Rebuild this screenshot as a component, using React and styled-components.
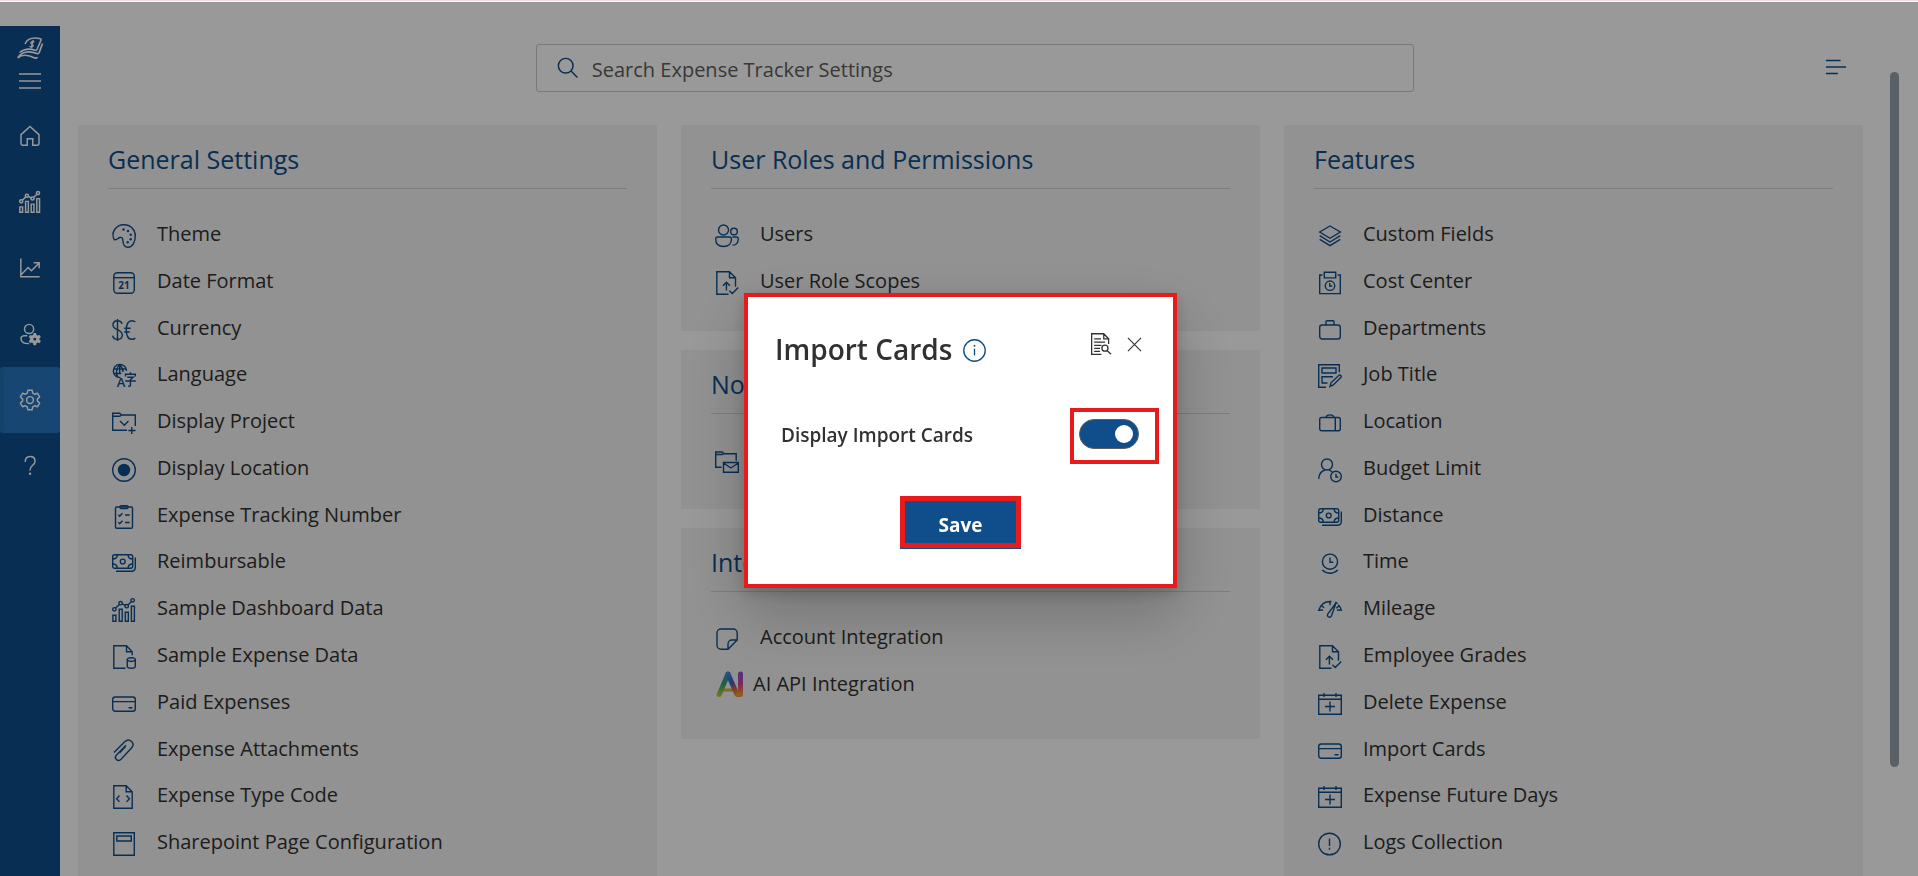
import React from "react";
import styled, { createGlobalStyle, css } from "styled-components";

const blue = "#0f4e8a";
const ink = "#323130";
const red = "#e81a1c";

const GlobalStyle = createGlobalStyle`
  * { box-sizing: border-box; }
  body {
    margin: 0;
    background: #fff;
    color: ${ink};
    font-family: "Segoe UI", "Open Sans", "Noto Sans", sans-serif;
    font-size: 20px;
    overflow: hidden;
  }
  h1, h2, ul { margin: 0; padding: 0; }
  button { font: inherit; color: inherit; background: none; border: 0; padding: 0; cursor: pointer; }
  a { color: inherit; text-decoration: none; }
`;

/* ---------- icons ---------- */

const Svg = styled.svg`
  display: block;
  flex: none;
  width: ${(p) => p.$size || 24}px;
  height: ${(p) => p.$size || 24}px;
  fill: none;
  stroke: currentColor;
  stroke-width: ${(p) => p.$weight || 1.4};
  overflow: visible;
  .solid { fill: currentColor; stroke: none; }
  text { fill: currentColor; stroke: none; font-family: "Open Sans", "Noto Sans", sans-serif; }
`;

const plusCalendar = (
  <>
    <path d="M.7 3.2h22.6v19.1H.7zM.7 7.3h22.6M6 1v4M18 1v4M12 9.500v10M7 14.500h10" />
  </>
);
const money = (
  <>
    <rect x=".7" y="3.7" width="20" height="13.6" rx="2" />
    <circle cx="10.7" cy="10.5" r="2.4" />
    <path d="M.7 8c3 0 4.6-1.5 4.6-4.3M.7 13c3 0 4.6 1.500 4.600 4.300M20.700 8c-3 0-4.600-1.500-4.600-4.300M20.700 13c-3 0-4.600 1.500-4.600 4.300M23.300 6.500v10.300a3.500 3.500 0 0 1-3.500 3.500H4" />
  </>
);
const card = (
  <>
    <rect x=".7" y="5" width="22.6" height="14.300" rx="2.500" />
    <path d="M.7 9.600h22.600M16.500 15.700h4" />
  </>
);
const barTrend = (
  <>
    <path d="M.9 17.300h3v5.900h-3zM7.200 11.300h3v11.900h-3zM13.300 14.300h3v8.900h-3zM19.400 8.300h3v14.900h-3z" />
    <circle cx="2.400" cy="11.300" r="1.700" />
    <circle cx="8.600" cy="5.200" r="1.700" />
    <circle cx="14.700" cy="8.200" r="1.700" />
    <circle cx="20.700" cy="2.300" r="1.700" />
    <path d="M3.600 10.100l3.800-3.700M10.200 5.900l3 1.500M15.900 7l3.600-3.500" />
  </>
);
const docUpload = (
  <>
    <path d="M13.500 23.300H1.800V.7h12.700l6 6v9M14.500.7v6h6M11.400 19.500v-8.300M7.900 14.700l3.500-3.500 3.500 3.500M14.300 19.700l3 2.800 6-6" />
  </>
);

const icons = {
  theme: (
    <>
      <path d="M2.200 15.700C-1.500 8.500 4 .7 11.800.7c7 0 11.500 5 11.500 11.300 0 6-2.800 11.300-7.300 11.300-4 0-5-3.300-5.200-7.300-.1-2.300-1.200-3-3-2.500-2.300.6-3.300 2.900-5.600 2.200z" />
      <g className="solid">
        <circle cx="11.500" cy="5.500" r="1.200" /><circle cx="16" cy="7" r="1.200" />
        <circle cx="18.700" cy="10.700" r="1.200" /><circle cx="18.700" cy="15.200" r="1.200" />
        <circle cx="15.700" cy="18.300" r="1.200" />
      </g>
    </>
  ),
  date: (
    <>
      <rect x="1.800" y="1.800" width="20.500" height="20.500" rx="3.500" />
      <path d="M1.800 6.700h20.500" />
      <text x="12" y="18" fontSize="10" fontWeight="700" textAnchor="middle">21</text>
    </>
  ),
  currency: (
    <>
      <path d="M5.500 1v22M10 5.800C9.600 3.700 8 2.700 5.500 2.700 2.800 2.700 1 4.200 1 6.900c0 5.600 9.300 3.800 9.300 10 0 2.900-1.800 4.400-4.800 4.400S1 20 .7 17.600" />
      <path d="M23.300 4c-1-1-2.200-1.300-3.300-1.300-4 0-5.700 4.200-5.700 9.300s1.700 9.300 5.700 9.300c1.100 0 2.300-.3 3.300-1.300M12.200 10.300h6.500M12.200 14h5.500" />
    </>
  ),
  language: (
    <>
      <path d="M8.500 13.500A6.600 6.600 0 1 1 14.500 7M6 13.400C3.800 10.500 3.800 4 7.700.8c2.500 2.500 3.300 4.700 3.300 7.200M1.500 5h12.300M1.300 9.500h8M7.700 1v8.500" />
      <text x="9" y="23" fontSize="13" fontWeight="600" textAnchor="middle">A</text>
      <path d="M13.500 12.500v-2.300h9.800v2.300M18.400 8.200v2M15.300 13.300h5.800l-2.700 2.500v5.200c0 1-.7 1.300-2.200 1.300M13.200 17h10.600" />
    </>
  ),
  project: (
    <>
      <path d="M15 19.300H.7V2.300h7l2 1.700h13.600v11M.7 5.300h7l2-1.300M8 10l4.300 4.300L16.500 10M19.800 16v7M16.300 19.500h7.200" />
    </>
  ),
  target: (
    <>
      <circle cx="12" cy="12" r="11.300" />
      <circle className="solid" cx="12" cy="12" r="6.200" />
    </>
  ),
  checklist: (
    <>
      <rect x="3.500" y="2" width="17" height="21.300" rx="1.200" />
      <rect x="8" y=".7" width="8" height="2.800" rx="1.300" />
      <path d="M6.300 9.800l1.400 1.400 2.800-3M6.300 17.300l1.400 1.400 2.800-3M13 10h4.700M13 17.500h4.700" />
    </>
  ),
  money,
  barTrend,
  docData: (
    <>
      <path d="M13.500 23.300H1.800V.7h12.700l5.700 6v3.500M14.500.7v6h5.700" />
      <ellipse cx="19.300" cy="14.500" rx="4" ry="1.800" />
      <path d="M15.300 14.500v6.800c0 2.600 8 2.600 8 0v-6.800" />
    </>
  ),
  card,
  clip: (
    <path d="M2 13.500L12.700 2.800c5-4.500 11 1.500 6.800 6.200L9 20.200c-3.300 3.200-7.600-1-4.500-4.300L14 6.300M13.500 7.500L7.500 14" />
  ),
  code: (
    <path d="M1.800.7h12.400l6 6v16.600H1.800zM14.200.7v6h6M7.500 10.500L4.600 13.700l2.900 3.200M14.500 10.500l2.900 3.200-2.900 3.200" />
  ),
  page: <path d="M1.800.7h20.500v22.600H1.800zM4.800 4h14.500v5H4.800z" />,
  users: (
    <>
      <circle cx="8.500" cy="6" r="5" />
      <circle cx="19" cy="7.500" r="3.300" />
      <path d="M2.800 13h11.700c1.200 0 2 .8 2 2 0 4.500-3 7.500-8 7.500S.7 19.500.7 15c0-1.200.9-2 2.100-2zM17.500 13h4c1.100 0 1.800.7 1.800 1.800 0 4-2.300 6.700-5.800 6.300" />
    </>
  ),
  docUpload,
  folderMail: (
    <path d="M6.500 18.300H.7V3h6.500l2 1.700h12v7M.7 5.500h6.500l2-.8M8.500 13.500h14.800v9.800H8.500zM8.500 14l7.400 5 7.400-5" />
  ),
  note: (
    <path d="M13 22.200H6a4 4 0 0 1-4-4V6a4 4 0 0 1 4-4h12.200a4 4 0 0 1 4 4v7zM22.200 13h-5.200a4 4 0 0 0-4 4v5.200" />
  ),
  layers: (
    <path d="M12 2l10.300 6L12 14.300 1.700 8zM1.700 11.700L12 18l10.300-6.300M1.700 15.300L12 21.700l10.300-6.400" />
  ),
  cost: (
    <>
      <path d="M4.500 4H1.700v18.600h20.600V4h-2.800M6.300 1.300h11.400v5.600H6.300zM11.700 12v3h2.500" />
      <circle cx="12" cy="14.700" r="4.700" />
    </>
  ),
  briefcase: (
    <>
      <rect x="1.700" y="7" width="20.600" height="14" rx="2.500" />
      <path d="M8 7V3.700c0-.7.400-1 1-1h6c.6 0 1 .3 1 1V7" />
    </>
  ),
  form: (
    <path d="M8 23.300H.7V.7h20.600v7.500M4 4h14v5H4zM4 19.500V12.800h11M4 19h5.500M12 22.500l1-3.700 8-7.500c1.300-1 3 .6 2 1.900l-8 8z" />
  ),
  luggage: (
    <>
      <rect x="1.700" y="6.500" width="20.600" height="13.300" rx="2" />
      <path d="M17.300 6.500v13.300M8 6.500c.7-3.500 7.300-3.500 8 0" />
    </>
  ),
  budget: (
    <>
      <circle cx="9" cy="6.500" r="5.500" />
      <path d="M.7 21c.3-5 2.800-8.200 6.500-9M11 12l3.500 2M18 15.700v3.300h2.300" />
      <circle cx="18" cy="18.500" r="5.300" />
    </>
  ),
  time: (
    <>
      <circle cx="12" cy="10.700" r="7.600" />
      <path d="M12 6.500v4.800h3.300M4.200 19c4.500 4.300 11.100 4.300 15.600 0" />
    </>
  ),
  gauge: (
    <path d="M5 12l-4.300.3C3 5.800 8 3 13.500 3.500M3.500 7.500l2.500 2.300M12 3.300v4M20.300 6.800c1.500 1.500 2.500 3.500 3 5.500L19 12M20.800 8l-2.500 2.300M18 5l-8.300 11c-1.300 2.500 2.300 4.500 3.800 1.800zM17.200 4.200l2.500 1.300" />
  ),
  plusCalendar,
  alert: (
    <>
      <circle cx="11.500" cy="12" r="10.800" />
      <path d="M11.500 6.500v7.500M11.500 15.800v2" />
    </>
  ),
  home: <path d="M2.200 10.500L12 1.500l9.800 9v10a1.500 1.500 0 0 1-1.500 1.500H15v-7H9v7H3.700a1.500 1.500 0 0 1-1.500-1.500z" />,
  lineTrend: <path d="M2 1.500v20h20.500M2.500 19l7.500-7.500 3.500 3.500 8-8M16 6.300h6v6" />,
  userGear: (
    <>
      <circle cx="11" cy="6.500" r="5" />
      <path d="M9 13.800H5.500c-5 0-5 8.700 4.500 8.700h1" />
      <path className="solid" fillRule="evenodd" d="M15.800 11h2.800l.5 2 1.300.7 2-.7 1.400 2.400-1.500 1.400v1.500l1.500 1.400-1.400 2.400-2-.7-1.300.8-.5 2h-2.800l-.5-2-1.300-.8-2 .7-1.400-2.400 1.500-1.400v-1.500l-1.500-1.400 1.400-2.400 2 .7 1.300-.7zM17.200 16a1.600 1.600 0 1 0 0 3.200 1.600 1.600 0 0 0 0-3.200z" />
    </>
  ),
  gear: (
    <>
      <path d="M9.700 1.300h4.600l.7 3.200 2.100 1.200 3.100-1 2.300 4-2.400 2.100v2.400l2.400 2.100-2.300 4-3.100-1-2.100 1.200-.7 3.200H9.700L9 19.500l-2.100-1.200-3.100 1-2.300-4 2.400-2.100v-2.400L1.500 8.700l2.300-4 3.100 1L9 4.500z" strokeLinejoin="round" />
      <circle cx="12" cy="12" r="3.700" />
    </>
  ),
  help: (
    <>
      <path d="M6.800 7.500c0-3.700 2-5.800 5.300-5.800s5.400 2 5.400 5c0 4.500-5.400 4.600-5.400 9.500v.8" />
      <circle className="solid" cx="12.100" cy="20.500" r="1.300" />
    </>
  ),
  menu: <path d="M1 5h22M1 12h22M1 19h22" />,
  search: (
    <>
      <circle cx="9.500" cy="9.500" r="8" />
      <path d="M15.300 15.300l7 7" />
    </>
  ),
  filter: <path d="M1 5h16M1 12h22M1 19h13" />,
  info: (
    <>
      <circle cx="12" cy="12" r="11.200" />
      <path d="M12 10.200v7" />
      <circle className="solid" cx="12" cy="7" r="1" />
    </>
  ),
  docSearch: (
    <>
      <path d="M12.500 23.200H1.800V.8H15l5.300 5.500V12M15 .8v5.500h5.300M4.500 6.500h7.500M4.500 10h12M4.500 13.500h8M4.500 16.800h6.500M4.500 20h6.500M18.500 19.200l4.500 4" />
      <circle cx="16.300" cy="16.500" r="3.300" />
    </>
  ),
  close: <path d="M1.500 1.500l21 21M22.500 1.500l-21 21" />,
};

const Icon = ({ name, size, weight }) => (
  <Svg viewBox="0 0 24 24" $size={size} $weight={weight} aria-hidden="true">
    {icons[name]}
  </Svg>
);

const Logo = () => (
  <Svg viewBox="0 0 26 24" $size={26} $weight={1.5} aria-hidden="true">
    <path d="M8 8c2-4.500 7-7 15.300-5.300.8.200 1 .7.700 1.400L20 13.500c-.4 1-1 1.100-1.800.8-5.500-2-10.500-1.800-15.700 2.200" />
    <path d="M25.500 7.500l-3.300 9c-.4 1-1.200 1.300-2.200 1C13 15 5.500 15 .7 21.700c4.500-3.200 10.500-3.200 17 .2 1.300.5 2.300.3 2.800-.9" strokeWidth="1.700" />
    <path d="M17.300 6.300c-1-1.300-3.300-.9-3.400.5-.1 1.500 2.400 1.400 2.200 3-.2 1.500-2.700 1.700-3.600.2M16.200 4l-2.200 8.300" strokeWidth="1.300" />
  </Svg>
);

const AiLogo = () => (
  <Svg viewBox="0 0 28 28" $size={28} $weight={5} aria-hidden="true">
    <defs>
      <linearGradient id="aiLeft" gradientUnits="userSpaceOnUse" x1="12" y1="2" x2="4" y2="26">
        <stop offset="0" stopColor="#3c8fd0" /><stop offset=".5" stopColor="#35a06a" /><stop offset="1" stopColor="#b9c93a" />
      </linearGradient>
      <linearGradient id="aiRight" gradientUnits="userSpaceOnUse" x1="12" y1="3" x2="22" y2="25">
        <stop offset="0" stopColor="#3c8fd0" /><stop offset=".45" stopColor="#3f5fcc" /><stop offset=".75" stopColor="#e0623c" /><stop offset="1" stopColor="#f09a3a" />
      </linearGradient>
      <linearGradient id="aiStem" gradientUnits="userSpaceOnUse" x1="26" y1="2" x2="25" y2="26">
        <stop offset="0" stopColor="#8a4be0" /><stop offset=".5" stopColor="#cf4690" /><stop offset="1" stopColor="#f0a03a" />
      </linearGradient>
    </defs>
    <path d="M8 20h12" stroke="#d9b13a" strokeWidth="3" />
    <path d="M13 4L4.200 24.500" stroke="url(#aiLeft)" strokeLinecap="round" />
    <path d="M25.500 4v20.500" stroke="url(#aiStem)" strokeLinecap="round" />
    <path d="M13 4l9 20.500h2" stroke="url(#aiRight)" strokeLinecap="round" strokeLinejoin="round" />
  </Svg>
);

/* ---------- page shell ---------- */

const TopStrip = styled.div`
  height: 2px;
  background: #fff;
  border-top: 1px solid #f3dde1;
`;

const Shell = styled.div`
  display: flex;
  height: calc(100vh - 2px);
`;

const Sidebar = styled.nav`
  display: flex;
  flex-direction: column;
  align-items: center;
  flex: none;
  width: 60px;
  margin-top: 24px;
  padding-top: 9px;
  background: ${blue};
  color: #fff;
`;

const MenuButton = styled.button`
  display: grid;
  place-items: center;
  width: 60px;
  height: 42px;
  padding-bottom: 3px;
`;

const NavLink = styled.a`
  display: grid;
  place-items: center;
  width: 60px;
  height: 66px;
  border-radius: 3px;
  ${(p) => p.$active && css`
    background: #2876be;
    border-left: 4px solid #226eb3;
    padding-right: 4px;
  `}
`;

const Main = styled.main`
  display: flex;
  flex-direction: column;
  flex: 1;
  min-width: 0;
`;

const Header = styled.header`
  display: grid;
  grid-template-columns: 1fr 48% 1fr;
  align-items: center;
  padding: 42px 0 33px;
`;

const SearchBox = styled.label`
  grid-column: 2;
  display: flex;
  align-items: center;
  gap: 13px;
  height: 48px;
  padding: 0 20px;
  border: 1px solid #cccac8;
  border-radius: 3px;
  color: ${blue};
`;

const SearchInput = styled.input`
  flex: 1;
  min-width: 0;
  border: 0;
  outline: 0;
  padding: 2px 0 0;
  background: none;
  font: inherit;
  color: ${ink};
  &::placeholder { color: #605e5c; opacity: 1; }
`;

const FilterButton = styled.button`
  justify-self: end;
  margin: 0 43px 3px 0;
  color: ${blue};
`;

const Columns = styled.div`
  display: grid;
  grid-template-columns: repeat(3, 1fr);
  grid-template-rows: minmax(0, 1fr);
  gap: 24px;
  flex: 1;
  min-height: 0;
  padding: 0 27px 0 18px;
`;

const Column = styled.div`
  display: flex;
  flex-direction: column;
  gap: 19px;
  min-height: 0;
`;

const ScrollThumb = styled.div`
  flex: none;
  width: 9px;
  height: 80%;
  max-height: 695px;
  margin: 70px 19px 0 0;
  border-radius: 5px;
  background: #94a0aa;
`;

/* ---------- settings panels ---------- */

const PanelBox = styled.section`
  display: flex;
  flex-direction: column;
  flex: ${(p) => (p.$fill ? "1 1 0" : "none")};
  min-height: 0;
  padding: 0 30px ${(p) => (p.$fill ? 11 : 27)}px;
  background: #f3f3f3;
`;

const PanelTitle = styled.h2`
  flex: none;
  height: 64px;
  padding-top: 15px;
  border-bottom: 1px solid #d2d2d2;
  margin-bottom: 21px;
  color: ${blue};
  font-size: 25px;
  font-weight: 400;
  line-height: 38px;
`;

const List = styled.ul`
  display: flex;
  flex-direction: column;
  flex: 1;
  min-height: 0;
  list-style: none;
`;

const Item = styled.li`
  flex: 0 1 ${(p) => (p.$branded ? 52 : 47)}px;
  min-height: 46px;
`;

const ItemLink = styled.a`
  display: flex;
  align-items: flex-start;
  gap: ${(p) => (p.$branded ? 10 : 21)}px;
  padding: 10px 4px 0;
  line-height: 28px;
  svg { color: ${blue}; margin-top: ${(p) => (p.$branded ? 0 : 4)}px; }
`;

const Panel = ({ title, items, fill }) => (
  <PanelBox $fill={fill}>
    <PanelTitle>{title}</PanelTitle>
    <List>
      {items.map(([label, icon]) => (
        <Item key={label} $branded={icon === "ai"}>
          <ItemLink href="#" $branded={icon === "ai"}>
            {icon === "ai" ? <AiLogo /> : <Icon name={icon} />}
            {label}
          </ItemLink>
        </Item>
      ))}
    </List>
  </PanelBox>
);

const general = [
  ["Theme", "theme"],
  ["Date Format", "date"],
  ["Currency", "currency"],
  ["Language", "language"],
  ["Display Project", "project"],
  ["Display Location", "target"],
  ["Expense Tracking Number", "checklist"],
  ["Reimbursable", "money"],
  ["Sample Dashboard Data", "barTrend"],
  ["Sample Expense Data", "docData"],
  ["Paid Expenses", "card"],
  ["Expense Attachments", "clip"],
  ["Expense Type Code", "code"],
  ["Sharepoint Page Configuration", "page"],
];
const roles = [["Users", "users"], ["User Role Scopes", "docUpload"]];
const notifications = [["Email", "folderMail"]];
const integrations = [["Account Integration", "note"], ["AI API Integration", "ai"]];
const features = [
  ["Custom Fields", "layers"],
  ["Cost Center", "cost"],
  ["Departments", "briefcase"],
  ["Job Title", "form"],
  ["Location", "luggage"],
  ["Budget Limit", "budget"],
  ["Distance", "money"],
  ["Time", "time"],
  ["Mileage", "gauge"],
  ["Employee Grades", "docUpload"],
  ["Delete Expense", "plusCalendar"],
  ["Import Cards", "card"],
  ["Expense Future Days", "plusCalendar"],
  ["Logs Collection", "alert"],
];

const nav = [
  ["Home", "home"],
  ["Dashboard", "barTrend"],
  ["Reports", "lineTrend"],
  ["User settings", "userGear"],
  ["Settings", "gear"],
  ["Help", "help"],
];

/* ---------- dialog ---------- */

const Backdrop = styled.div`
  position: fixed;
  inset: 2px 0 0;
  display: grid;
  place-items: center;
  padding: 3px 0 0 3px;
  background: rgba(0, 0, 0, 0.4);
`;

const Dialog = styled.div`
  width: 433px;
  padding-bottom: 36px;
  border: 4px solid ${red};
  background: #fff;
  box-shadow: 0 26px 58px rgba(0, 0, 0, 0.22), 0 5px 14px rgba(0, 0, 0, 0.18);
`;

const DialogHeader = styled.div`
  display: flex;
  align-items: flex-start;
  padding: 32px 31px 0 27px;
`;

const DialogTitle = styled.h1`
  font-size: 28px;
  font-weight: 600;
  line-height: 40px;
`;

const DialogButton = styled.button`
  display: grid;
  place-items: center;
  flex: none;
  height: 30px;
  margin-left: ${(p) => p.$gap || 0}px;
  color: ${(p) => (p.$accent ? blue : ink)};
`;

const InfoButton = styled(DialogButton)`
  height: 42px;
  margin: 0 auto 0 11px;
`;

const SettingRow = styled.div`
  display: flex;
  align-items: center;
  justify-content: space-between;
  padding: 37px 14px 0 33px;
  font-weight: 600;
`;

const SettingLabel = styled.label`
  padding-bottom: 3px;
  font-size: 19px;
`;

const Highlight = styled.div`
  border: ${(p) => p.$thick}px solid ${red};
  padding: ${(p) => p.$pad || 0};
`;

const Toggle = styled.input`
  display: block;
  appearance: none;
  width: 60px;
  height: 30px;
  margin: 0;
  padding: 5px;
  border: 1px solid #605e5c;
  border-radius: 15px;
  background: #fff;
  &::before {
    content: "";
    display: block;
    width: 18px;
    height: 18px;
    border-radius: 50%;
    background: #605e5c;
  }
  &:checked { background: ${blue}; }
  &:checked::before { margin-left: 30px; background: #fff; }
`;

const DialogFooter = styled.div`
  display: flex;
  justify-content: center;
  padding-top: 32px;
`;

const SaveButton = styled.button`
  display: block;
  width: 111px;
  height: 42px;
  padding-top: 5px;
  background: ${blue};
  color: #fff;
  font-size: 19px;
  font-weight: 700;
  line-height: 30px;
`;

const SaveFrame = styled(Highlight)`
  box-shadow: 0 1px 0 ${blue};
`;

export default function App() {
  return (
    <>
      <GlobalStyle />
      <TopStrip />
      <Shell>
        <Sidebar>
          <Logo />
          <MenuButton aria-label="Menu"><Icon name="menu" weight={1.5} /></MenuButton>
          {nav.map(([label, icon]) => (
            <NavLink key={label} href="#" aria-label={label} $active={icon === "gear"}>
              <Icon name={icon} size={22} weight={1.6} />
            </NavLink>
          ))}
        </Sidebar>
        <Main>
          <Header>
            <SearchBox>
              <Icon name="search" size={22} weight={1.6} />
              <SearchInput type="search" placeholder="Search Expense Tracker Settings" />
            </SearchBox>
            <FilterButton aria-label="Filter"><Icon name="filter" size={22} weight={1.6} /></FilterButton>
          </Header>
          <Columns>
            <Column><Panel fill title="General Settings" items={general} /></Column>
            <Column>
              <Panel title="User Roles and Permissions" items={roles} />
              <Panel title="Notifications" items={notifications} />
              <Panel title="Integrations" items={integrations} />
            </Column>
            <Column><Panel fill title="Features" items={features} /></Column>
          </Columns>
        </Main>
        <ScrollThumb />
      </Shell>
      <Backdrop>
        <Dialog role="dialog" aria-modal="true" aria-labelledby="dialog-title">
          <DialogHeader>
            <DialogTitle id="dialog-title">Import Cards</DialogTitle>
            <InfoButton $accent aria-label="Information"><Icon name="info" size={23} weight={1.4} /></InfoButton>
            <DialogButton aria-label="View log"><Icon name="docSearch" size={22} /></DialogButton>
            <DialogButton $gap={15} aria-label="Close"><Icon name="close" size={15} weight={1.8} /></DialogButton>
          </DialogHeader>
          <SettingRow>
            <SettingLabel htmlFor="display-cards">Display Import Cards</SettingLabel>
            <Highlight $thick={4} $pad="7px 16px 11px 5px">
              <Toggle id="display-cards" type="checkbox" role="switch" defaultChecked />
            </Highlight>
          </SettingRow>
          <DialogFooter>
            <SaveFrame $thick={5}><SaveButton>Save</SaveButton></SaveFrame>
          </DialogFooter>
        </Dialog>
      </Backdrop>
    </>
  );
}
